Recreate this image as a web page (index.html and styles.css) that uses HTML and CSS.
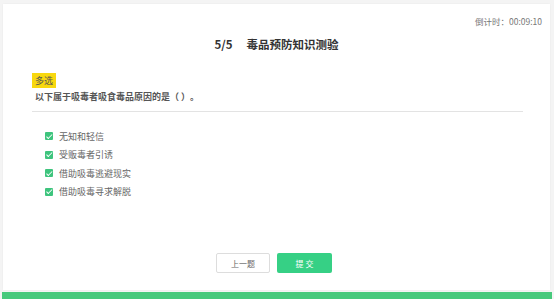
FILE: index.html
```html
<!DOCTYPE html>
<html lang="zh-CN">
<head>
  <meta charset="UTF-8" />
  <title>毒品预防知识测验</title>
  <link rel="stylesheet" href="styles.css">
</head>
<body>
  <div class="card">
    <div class="timer">倒计时：00:09:10</div>
    <div class="title"><span class="num">5/5</span>毒品预防知识测验</div>

    <!-- Question -->
    <div class="question">
      <div class="tag">多选</div>
      <div class="stem">以下属于吸毒者吸食毒品原因的是（ ）。</div>
    </div>

    <ul class="options">
      <li><span class="check"></span>无知和轻信</li>
      <li><span class="check"></span>受贩毒者引诱</li>
      <li><span class="check"></span>借助吸毒逃避现实</li>
      <li><span class="check"></span>借助吸毒寻求解脱</li>
    </ul>

    <div class="actions">
      <button class="btn prev">上一题</button>
      <button class="btn submit">提 交</button>
    </div>
  </div>
  <div class="bar"></div>
</body>
</html>
```

FILE: styles.css
```css
body {
  margin: 0;
  font-family: "Noto Sans CJK SC", "Noto Sans", sans-serif;
  background-color: #f4f4f4;
  text-spacing-trim: space-all;
}

.card {
  background: white;
  margin: 4px 4px 0 3px;
  height: 286px;
  padding-top: 12px;
  box-sizing: border-box;
  box-shadow: 0 0 2px rgba(0,0,0,0.05);
}

.timer {
  text-align: right;
  padding-right: 8px;
  font-size: 8.5px;
  line-height: 10px;
  color: #777;
}

.title {
  margin-top: 10px;
  text-align: center;
  font-size: 11.5px;
  line-height: 16px;
  font-weight: bold;
  color: #333;
}

.title .num {
  margin-right: 14px;
}

.question {
  margin: 21px 27px 0 29px;
  padding-bottom: 8px;
  border-bottom: 1px solid #e3e3e3;
}

.tag {
  width: max-content;
  background-color: #f8d80f;
  color: #555;
  font-size: 9px;
  line-height: 15px;
  padding: 0 3px;
}

.stem {
  margin-top: 3px;
  padding-left: 3px;
  font-size: 9px;
  line-height: 12px;
  font-weight: bold;
  color: #555;
}

.options {
  list-style: none;
  margin: 15px 0 0 42px;
  padding: 0;
}

.options li {
  display: flex;
  align-items: center;
  height: 18.5px;
  font-size: 9px;
  color: #666;
}

.check {
  position: relative;
  width: 8px;
  height: 8px;
  border-radius: 1px;
  background-color: #3ec47d;
  margin-right: 6px;
}

.check::after {
  content: "";
  position: absolute;
  left: 2.5px;
  top: 0.5px;
  width: 2px;
  height: 4.5px;
  border: solid white;
  border-width: 0 1px 1px 0;
  transform: rotate(45deg);
}

.actions {
  display: flex;
  justify-content: center;
  gap: 7px;
  margin-top: 52px;
  padding-right: 5px;
}

.btn {
  width: 54px;
  height: 20px;
  font-family: inherit;
  font-size: 8px;
  border-radius: 2px;
  cursor: pointer;
}

.btn.prev {
  background: white;
  color: #666;
  border: 1px solid #ddd;
}

.btn.submit {
  width: 55px;
  background-color: #36d085;
  color: white;
  border: none;
}

.bar {
  height: 7px;
  margin: 2px 2px 0 2px;
  background-color: #47c97c;
}
```
